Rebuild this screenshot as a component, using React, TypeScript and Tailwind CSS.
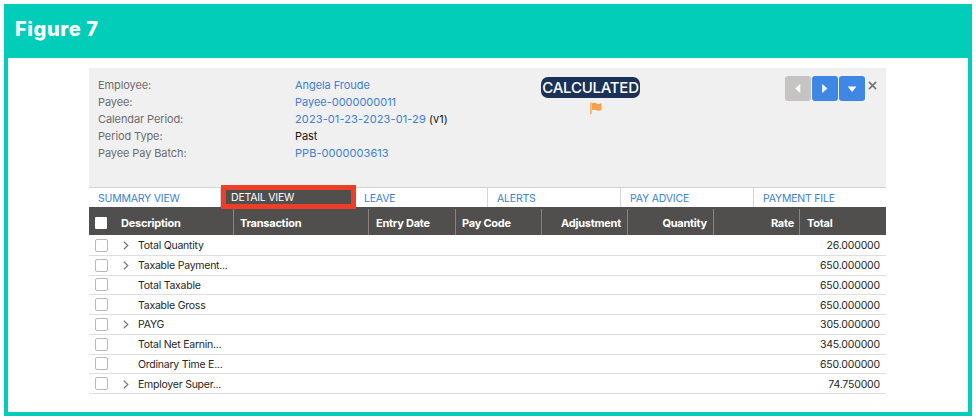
type Row = {
  label: string;
  total: string;
  expandable?: boolean;
};

const details = [
  { label: "Employee:", value: "Angela Froude", valueClass: "text-[#3d7fd0] tracking-[-0.06px]" },
  { label: "Payee:", value: "Payee-0000000011", valueClass: "text-[#3d7fd0] tracking-[-0.02px]" },
  {
    label: "Calendar Period:",
    value: "2023-01-23-2023-01-29",
    valueClass: "text-[#3d7fd0] tracking-[0.12px]",
    suffix: "(v1)",
  },
  { label: "Period Type:", value: "Past", valueClass: "text-[#141414] tracking-[-0.1px]" },
  { label: "Payee Pay Batch:", value: "PPB-0000003613", valueClass: "text-[#3d7fd0] tracking-[0.06px]" },
];

const tabs = ["SUMMARY VIEW", "DETAIL VIEW", "LEAVE", "ALERTS", "PAY ADVICE", "PAYMENT FILE"];

const columns = [
  { label: "Transaction", className: "w-[135px] pl-[6px]" },
  { label: "Entry Date", className: "w-[87px] pl-[7px]" },
  { label: "Pay Code", className: "w-[86px] pl-[6px]" },
  { label: "Adjustment", className: "w-[86px] pr-[6px] justify-end" },
  { label: "Quantity", className: "w-[86px] pr-[6px] justify-end" },
  { label: "Rate", className: "w-[86px] pr-[5px] justify-end" },
  { label: "Total", className: "flex-1 pl-[7px]" },
];

const rows: Row[] = [
  { label: "Total Quantity", total: "26.000000", expandable: true },
  { label: "Taxable Payment...", total: "650.000000", expandable: true },
  { label: "Total Taxable", total: "650.000000" },
  { label: "Taxable Gross", total: "650.000000" },
  { label: "PAYG", total: "305.000000", expandable: true },
  { label: "Total Net Earnin...", total: "345.000000" },
  { label: "Ordinary Time E...", total: "650.000000" },
  { label: "Employer Super...", total: "74.750000", expandable: true },
];

function NavButton({ points, disabled }: { points: string; disabled?: boolean }) {
  return (
    <button
      className={`flex h-[25px] w-[26px] items-center justify-center rounded-[3px] ${
        disabled ? "bg-[#c5c4c3]" : "bg-[#3f87e5]"
      }`}
    >
      <svg width="26" height="25" viewBox="0 0 26 25" fill="#fff">
        <polygon points={points} />
      </svg>
    </button>
  );
}

function PayeeHeader() {
  return (
    <div className="flex h-[119px] bg-[#f0f0f0] pl-[9px]">
      <div className="w-[443px] pt-[9px]">
        {details.map((item) => (
          <div key={item.label} className="flex h-[16.9px] items-center whitespace-pre">
            <span className="w-[197px] tracking-[-0.1px] text-[#6c6c6c]">{item.label}</span>
            <span className={item.valueClass}>{item.value}</span>
            {item.suffix && <span className="text-[#141414]"> {item.suffix}</span>}
          </div>
        ))}
      </div>

      <div className="flex w-[99px] flex-col items-center pt-[9px]">
        <span className="flex h-[21px] w-[99px] items-center justify-center rounded-[7px] bg-[#1c3157] text-[15px] font-medium tracking-[-0.25px] text-white">
          CALCULATED
        </span>
        <svg width="12" height="13" viewBox="0 0 12 13" className="ml-[10px] mt-[4px]">
          <path d="M0.9 0.5V12.2" stroke="#f3a04b" strokeWidth="1.3" />
          <path d="M2 1.2C4 0.2 5.4 1.2 6.6 1.6C8.2 2.1 9.6 1.9 11.5 1.2V8C9.6 8.9 8 8.7 6.6 8.2C5 7.6 3.6 7.4 2 8.2Z" fill="#f3a04b" />
        </svg>
      </div>

      <div className="ml-auto flex gap-px pr-[9px] pt-[8px]">
        <NavButton disabled points="10.2,12.5 15.3,8 15.3,17" />
        <NavButton points="10.2,8 15.4,12.5 10.2,17" />
        <NavButton points="8.8,10.6 17.4,10.6 13.1,16" />
        <svg width="9" height="9" viewBox="0 0 9 9" className="ml-[2px] mt-[5px]">
          <path d="M0.9 0.9L8.1 8.1M8.1 0.9L0.9 8.1" stroke="#727272" strokeWidth="1.5" />
        </svg>
      </div>
    </div>
  );
}

function ViewTabs() {
  return (
    <div className="flex h-[20px] border-t border-[#d2d2d2] bg-white text-[10.5px] tracking-[-0.2px]">
      {tabs.map((tab) =>
        tab === "DETAIL VIEW" ? (
          <div
            key={tab}
            className="z-10 -mt-[3px] flex h-[24px] w-[135px] shrink-0 items-center border-[5px] border-[#ee3e27] bg-[#504f4d] pl-[5px] pt-px text-white"
          >
            {tab}
          </div>
        ) : (
          <div
            key={tab}
            className="flex w-[133px] items-center border-r border-[#d5d5d5] pl-[9px] pt-[2px] text-[#3d7fd0] first:w-[132px] nth-3:w-[132px] nth-3:pl-[8px] last:flex-1 last:border-r-0"
          >
            {tab}
          </div>
        )
      )}
    </div>
  );
}

function DetailTable() {
  return (
    <div>
      <div className="flex h-[28px] bg-[#504f4d] pt-[2px] font-bold tracking-[-0.24px] text-white">
        <div className="flex w-[144px] items-center pl-[6px] pt-px">
          <span className="h-[12px] w-[12px] rounded-[1px] bg-white" />
          <span className="ml-[14px]">Description</span>
        </div>
        {columns.map((column) => (
          <div
            key={column.label}
            className={`flex items-center border-l border-[#858482] pt-px ${column.className}`}
          >
            {column.label}
          </div>
        ))}
      </div>

      <div className="pt-px text-[10.5px] text-[#252525]">
        {rows.map((row) => (
          <div
            key={row.label}
            className="flex h-[19.75px] items-center border-b border-[#dedede] pl-[6px] pr-[6px]"
          >
            <span className="h-[13px] w-[13px] rounded-[2px] border border-[#b9b9b9] bg-white" />
            <span className="ml-[15px] w-[15px]">
              {row.expandable && (
                <svg width="6" height="9" viewBox="0 0 6 9" fill="none" className="mt-px">
                  <path d="M0.8 0.8L4.8 4.5L0.8 8.2" stroke="#777" strokeWidth="1.2" />
                </svg>
              )}
            </span>
            <span className="pt-[2px] tracking-[-0.24px]">{row.label}</span>
            <span className="ml-auto pt-[2px] tracking-[-0.18px]">{row.total}</span>
          </div>
        ))}
      </div>
    </div>
  );
}

export default function App() {
  return (
    <div className="h-[420px] w-[976px] bg-white p-[4px] font-['Inter',sans-serif] text-[11px] leading-[14px]">
      <section className="flex h-[412px] flex-col border-4 border-[#02cdb9] bg-white">
        <header className="h-[50px] shrink-0 bg-[#02cdb9] pl-[7px] pt-[8px]">
          <h1 className="text-[20px] font-extrabold leading-[27px] tracking-[0.6px] text-white">Figure 7</h1>
        </header>
        <div className="ml-[81px] mt-[10px] w-[797px]">
          <PayeeHeader />
          <ViewTabs />
          <DetailTable />
        </div>
      </section>
    </div>
  );
}
